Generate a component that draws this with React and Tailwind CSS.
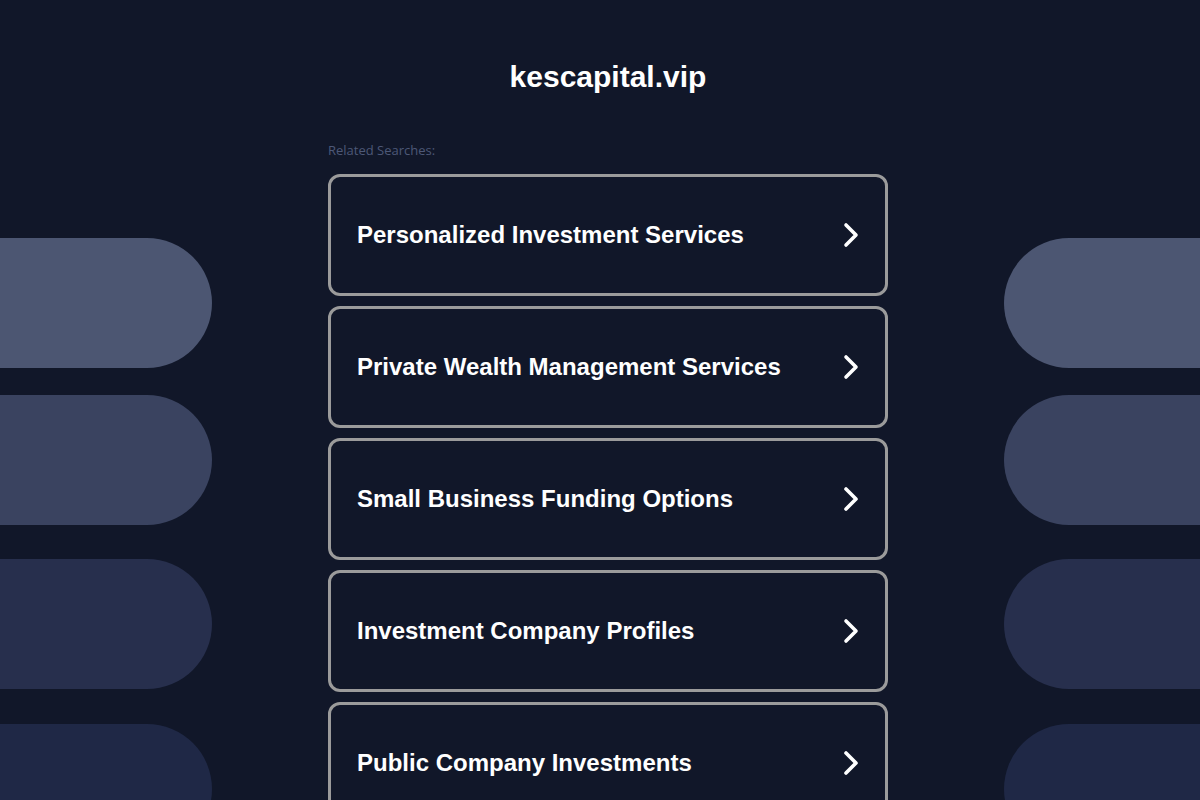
import React from 'react';

const searches = [
  'Personalized Investment Services',
  'Private Wealth Management Services',
  'Small Business Funding Options',
  'Investment Company Profiles',
  'Public Company Investments',
];

// decorative side pills, top to bottom
const pills = [
  { color: 'bg-[#4c5672]', space: 'mt-[238px]' },
  { color: 'bg-[#3a4360]', space: 'mt-[27px]' },
  { color: 'bg-[#272f4d]', space: 'mt-[34px]' },
  { color: 'bg-[#1f2846]', space: 'mt-[35px]' },
];

function Chevron() {
  return (
    <svg width="20" height="28" viewBox="0 0 20 28" fill="none" className="shrink-0">
      <path d="M5 4 L15 14 L5 24" stroke="white" strokeWidth="3.6" strokeLinecap="round" strokeLinejoin="round" />
    </svg>
  );
}

function Pills({ side }) {
  return (
    <div className="flex flex-col">
      {pills.map((p, i) => (
        <div
          key={i}
          className={`${p.space} ${p.color} h-[130px] shrink-0 ${side === 'left' ? 'rounded-r-full' : 'rounded-l-full'}`}
        />
      ))}
    </div>
  );
}

export default function App() {
  return (
    <div className="h-[800px] overflow-hidden bg-[#111729] flex" style={{ fontFamily: '"Liberation Sans", Arial, sans-serif' }}>
      <div className="w-[212px] shrink-0">
        <Pills side="left" />
      </div>

      <div className="w-[560px] shrink-0 ml-[116px] flex flex-col">
        <h1 className="mt-[59px] text-center text-[30px] leading-[36px] font-bold text-white">kescapital.vip</h1>
        <p className="mt-[48px] text-[13px] leading-[14px] font-medium text-[#4d5877]" style={{ fontFamily: '"Open Sans", sans-serif' }}>
          Related Searches:
        </p>
        <div className="mt-[17px] flex flex-col gap-[10px]">
          {searches.map((s) => (
            <a
              key={s}
              href="#"
              className="h-[122px] shrink-0 border-[3px] border-[#9b9b9b] rounded-[12px] flex items-center justify-between pl-[26px] pr-[24px]"
            >
              <span className="text-[24px] font-bold text-white">{s}</span>
              <Chevron />
            </a>
          ))}
        </div>
      </div>

      <div className="flex-1 ml-[116px]">
        <Pills side="right" />
      </div>
    </div>
  );
}
